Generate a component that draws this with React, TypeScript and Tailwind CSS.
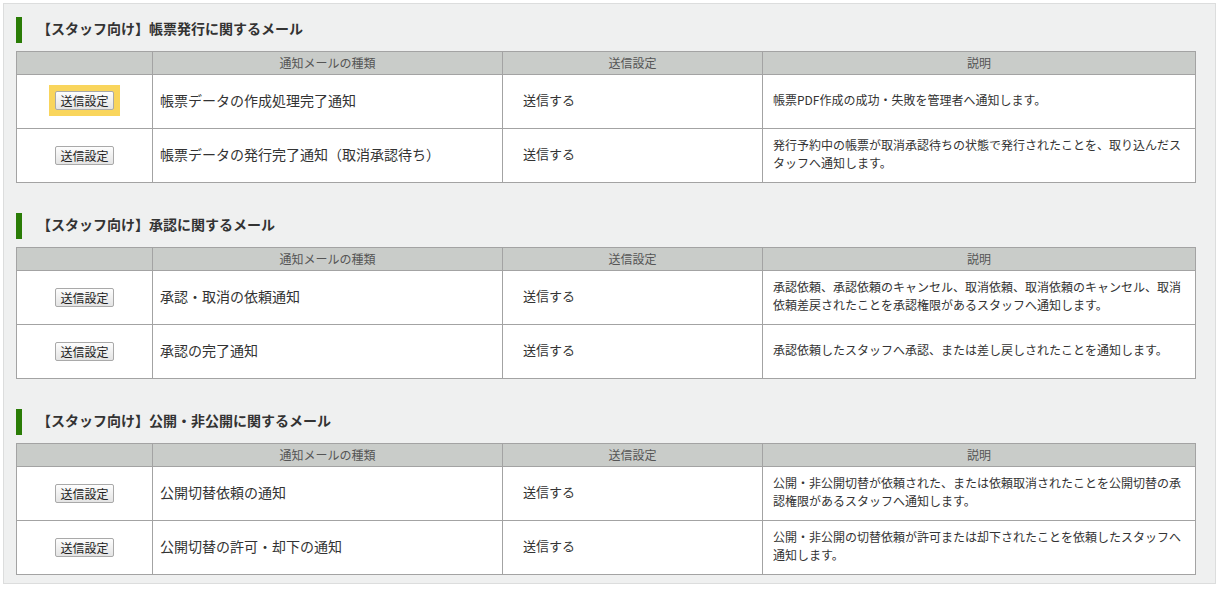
import React from 'react';

type Row = {
  name: string;
  setting: string;
  desc: string;
  focused?: boolean;
};

type Section = {
  title: string;
  rows: Row[];
};

const sections: Section[] = [
  {
    title: '【スタッフ向け】帳票発行に関するメール',
    rows: [
      { name: '帳票データの作成処理完了通知', setting: '送信する', desc: '帳票PDF作成の成功・失敗を管理者へ通知します。', focused: true },
      { name: '帳票データの発行完了通知（取消承認待ち）', setting: '送信する', desc: '発行予約中の帳票が取消承認待ちの状態で発行されたことを、取り込んだスタッフへ通知します。' },
    ],
  },
  {
    title: '【スタッフ向け】承認に関するメール',
    rows: [
      { name: '承認・取消の依頼通知', setting: '送信する', desc: '承認依頼、承認依頼のキャンセル、取消依頼、取消依頼のキャンセル、取消依頼差戻されたことを承認権限があるスタッフへ通知します。' },
      { name: '承認の完了通知', setting: '送信する', desc: '承認依頼したスタッフへ承認、または差し戻しされたことを通知します。' },
    ],
  },
  {
    title: '【スタッフ向け】公開・非公開に関するメール',
    rows: [
      { name: '公開切替依頼の通知', setting: '送信する', desc: '公開・非公開切替が依頼された、または依頼取消されたことを公開切替の承認権限があるスタッフへ通知します。' },
      { name: '公開切替の許可・却下の通知', setting: '送信する', desc: '公開・非公開の切替依頼が許可または却下されたことを依頼したスタッフへ通知します。' },
    ],
  },
];

const SendButton = ({ focused }: { focused?: boolean }) => {
  const btn = (
    <button className="h-[19px] px-[4px] text-[12px] leading-[17px] text-[#222] border border-[#a9a9a9] rounded-[2px] bg-gradient-to-b from-[#fdfdfd] to-[#e4e4e4]">
      送信設定
    </button>
  );
  if (focused) {
    return <span className="inline-block bg-[#f9d55c] p-[6px] leading-none">{btn}</span>;
  }
  return btn;
};

function MailTable({ section, first }: { section: Section; first: boolean }) {
  return (
    <div className={first ? '' : 'mt-[30px]'}>
      <div className="flex items-center h-[26px] border-l-[6px] border-[#2a7c06] pl-[15px] pb-[3px] text-[14px] font-semibold text-[#333]">
        {section.title}
      </div>
      <table className="mt-[8px] w-[1179px] table-fixed border-collapse border border-[#a3a3a3] text-[#333]">
        <colgroup>
          <col className="w-[136px]" />
          <col className="w-[350px]" />
          <col className="w-[260px]" />
          <col className="w-[433px]" />
        </colgroup>
        <thead>
          <tr className="h-[23px] bg-[#c9ccc9] text-[12px] text-[#555]">
            <th className="border border-[#a3a3a3] font-normal"></th>
            <th className="border border-[#a3a3a3] font-normal">通知メールの種類</th>
            <th className="border border-[#a3a3a3] font-normal">送信設定</th>
            <th className="border border-[#a3a3a3] font-normal">説明</th>
          </tr>
        </thead>
        <tbody className="bg-white">
          {section.rows.map((row) => (
            <tr key={row.name} className="h-[54px]">
              <td className="border border-[#a3a3a3] text-center align-middle pb-[3px]">
                <SendButton focused={row.focused} />
              </td>
              <td className="border border-[#a3a3a3] pl-[7px] pb-[3px] text-[14px]">{row.name}</td>
              <td className="border border-[#a3a3a3] pl-[20px] pb-[3px] text-[13px]">{row.setting}</td>
              <td className="border border-[#a3a3a3] pl-[10px] pr-[10px] pb-[3px] text-[12px] leading-[18px]">{row.desc}</td>
            </tr>
          ))}
        </tbody>
      </table>
    </div>
  );
}

export default function App() {
  return (
    <div className="w-[1219px] h-[589px] bg-white pt-[3px] pl-[3px]" style={{ fontFamily: '"Noto Sans CJK JP", "Noto Sans", sans-serif' }}>
      <div className="w-[1213px] bg-[#eff0f0] border border-[#dcdddd] pt-[13px] pb-[8px] pl-[12px]">
        {sections.map((s, i) => (
          <MailTable key={s.title} section={s} first={i === 0} />
        ))}
      </div>
    </div>
  );
}
